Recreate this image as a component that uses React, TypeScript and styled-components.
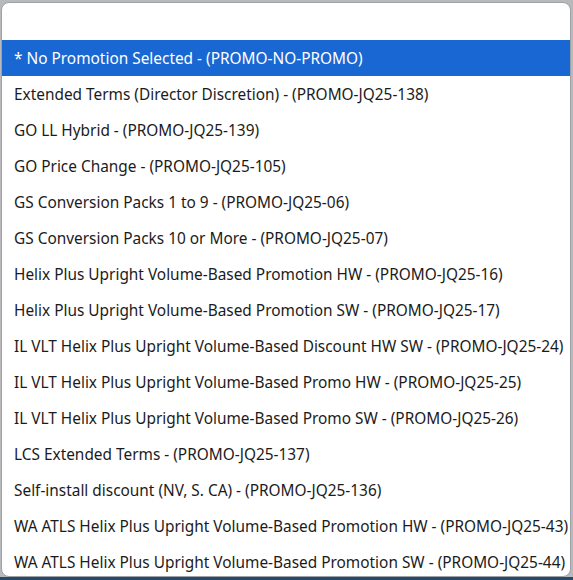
import React from "react";
import styled, { createGlobalStyle } from "styled-components";

const Global = createGlobalStyle`
  html, body { margin: 0; padding: 0; }
  body {
    background: #b8b9bb;
    width: 573px;
    height: 580px;
    overflow: hidden;
    font-family: "Noto Sans", "Open Sans", sans-serif;
  }
`;

const Page = styled.div`
  display: flex;
  flex-direction: column;
  width: 573px;
  height: 580px;
`;

const Popup = styled.div`
  margin: 2px 2px 0 1px;
  height: 575px;
  box-sizing: border-box;
  background: #ffffff;
  border: 1px solid #9ea1a6;
  border-radius: 8px;
  overflow: hidden;
  display: flex;
  flex-direction: column;
`;

const SearchArea = styled.div`
  height: 37px;
  flex-shrink: 0;
`;

const List = styled.ul`
  list-style: none;
  margin: 0;
  padding: 0;
`;

const Option = styled.li<{ $selected?: boolean }>`
  height: 36px;
  display: flex;
  align-items: center;
  padding-left: 12px;
  font-size: 15.4px;
  white-space: nowrap;
  color: ${(p) => (p.$selected ? "#ffffff" : "#1b1b1b")};
  background: ${(p) => (p.$selected ? "#1967d2" : "transparent")};
`;

const BottomBar = styled.div`
  height: 3px;
  background: #27496b;
`;

const options = [
  "* No Promotion Selected - (PROMO-NO-PROMO)",
  "Extended Terms (Director Discretion) - (PROMO-JQ25-138)",
  "GO LL Hybrid - (PROMO-JQ25-139)",
  "GO Price Change - (PROMO-JQ25-105)",
  "GS Conversion Packs 1 to 9 - (PROMO-JQ25-06)",
  "GS Conversion Packs 10 or More - (PROMO-JQ25-07)",
  "Helix Plus Upright Volume-Based Promotion HW - (PROMO-JQ25-16)",
  "Helix Plus Upright Volume-Based Promotion SW - (PROMO-JQ25-17)",
  "IL VLT Helix Plus Upright Volume-Based Discount HW SW - (PROMO-JQ25-24)",
  "IL VLT Helix Plus Upright Volume-Based Promo HW - (PROMO-JQ25-25)",
  "IL VLT Helix Plus Upright Volume-Based Promo SW - (PROMO-JQ25-26)",
  "LCS Extended Terms - (PROMO-JQ25-137)",
  "Self-install discount (NV, S. CA) - (PROMO-JQ25-136)",
  "WA ATLS Helix Plus Upright Volume-Based Promotion HW - (PROMO-JQ25-43)",
  "WA ATLS Helix Plus Upright Volume-Based Promotion SW - (PROMO-JQ25-44)",
];

export default function App() {
  return (
    <Page>
      <Global />
      <Popup>
        <SearchArea />
        <List>
          {options.map((o, i) => (
            <Option key={o} $selected={i === 0}>
              {o}
            </Option>
          ))}
        </List>
      </Popup>
      <BottomBar />
    </Page>
  );
}
